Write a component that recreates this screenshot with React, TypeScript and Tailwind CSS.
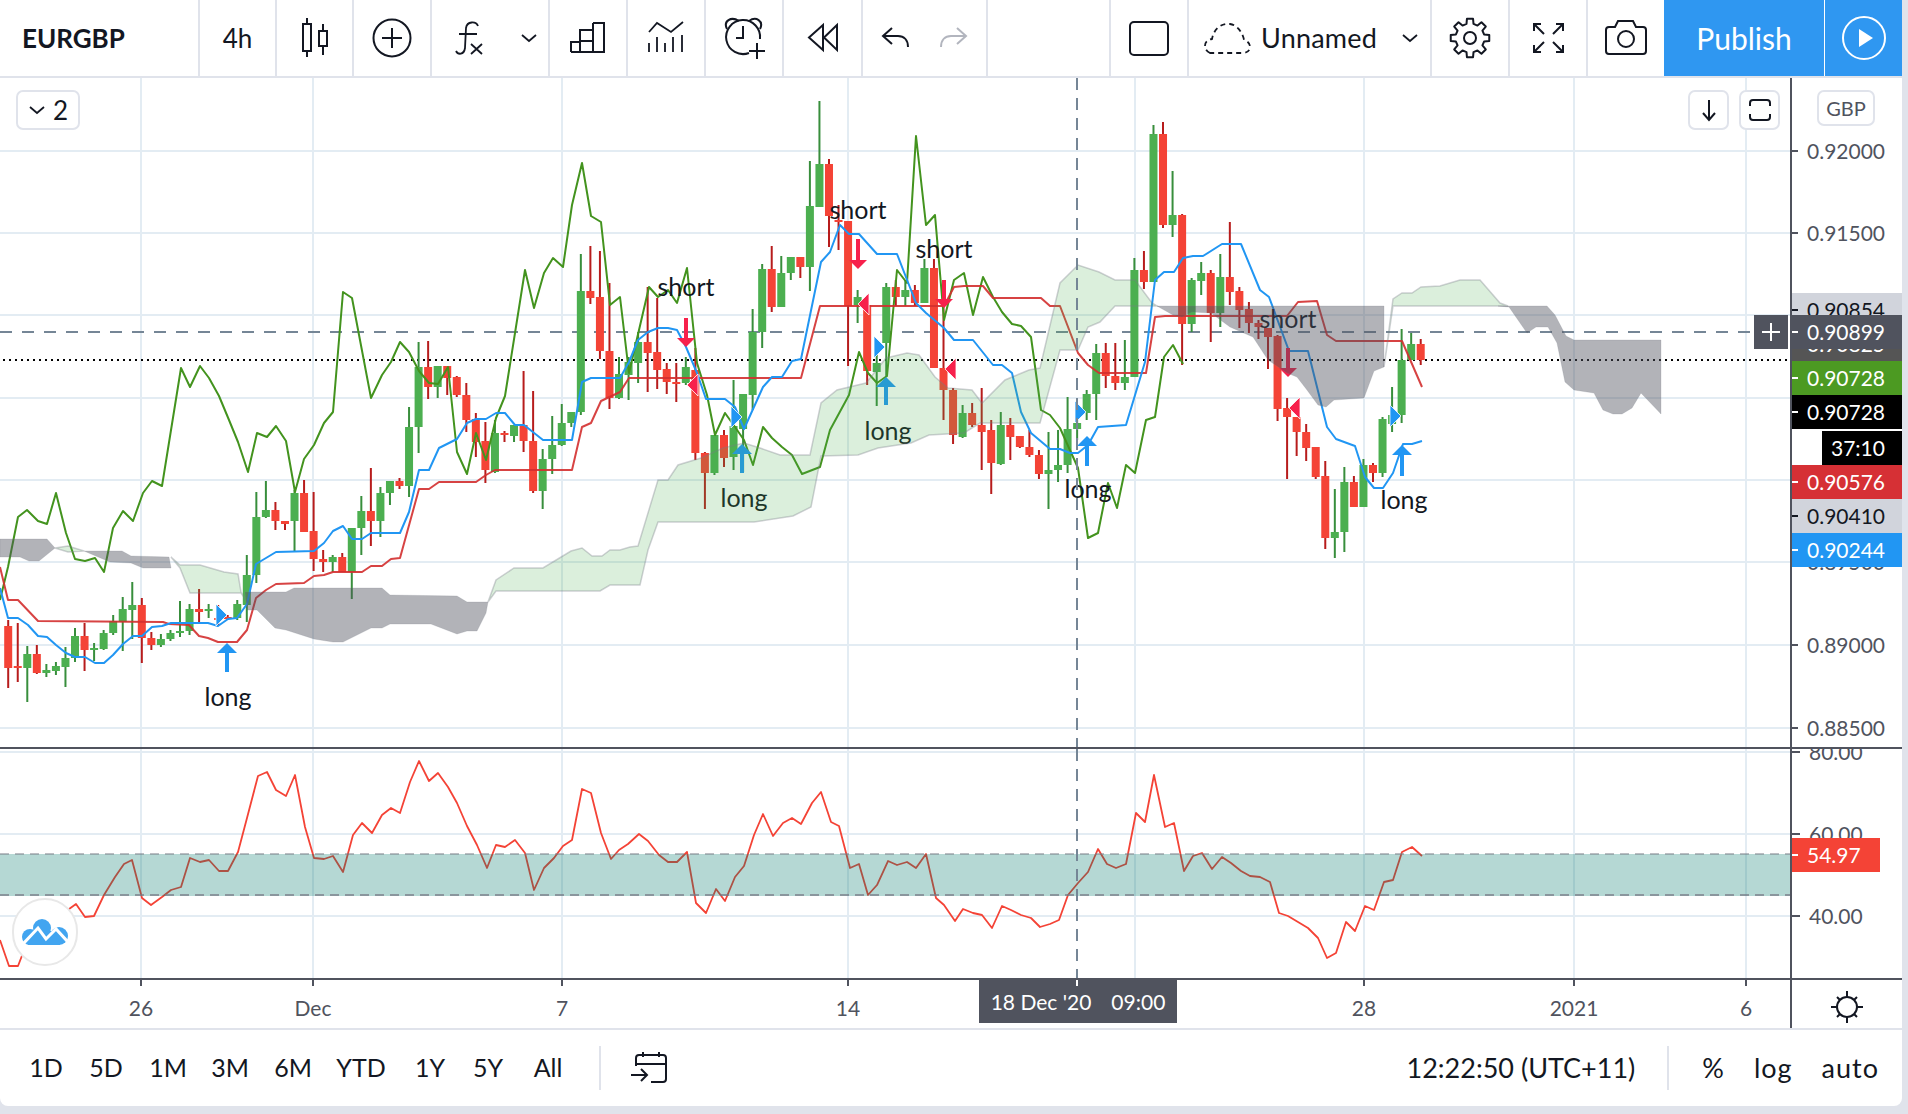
// candle: [bodyTop, bodyBottom, wickTop, wickBottom, isGreen], spaced 9.544px from x = 8.2
const CANDLES: [number, number, number, number, number][] = [
  [626, 668, 620, 688, 0], [666, 668, 623, 682, 0], [654, 668, 646, 702, 1], [654, 673, 645, 674, 0], [670, 673, 664, 677, 1],
  [666, 671, 662, 675, 1], [658, 667, 647, 687, 1], [636, 658, 628, 662, 1], [636, 650, 623, 671, 0], [648, 650, 643, 661, 1],
  [633, 649, 630, 650, 1], [621, 633, 615, 635, 1], [609, 622, 597, 651, 1], [605, 610, 582, 639, 1], [605, 638, 598, 663, 0],
  [638, 645, 632, 650, 0], [639, 645, 634, 647, 1], [633, 639, 630, 641, 1], [631, 633, 601, 637, 1], [609, 631, 604, 635, 1],
  [609, 612, 589, 622, 0], [609, 611, 604, 618, 1], [618, 620, 605, 625, 0], [617, 619, 615, 620, 0], [604, 618, 600, 620, 1],
  [575, 605, 555, 622, 1], [517, 575, 492, 583, 1], [510, 517, 481, 518, 1], [510, 521, 502, 530, 0], [521, 524, 521, 530, 0],
  [493, 521, 490, 551, 1], [493, 532, 480, 532, 0], [531, 559, 492, 571, 0], [559, 562, 550, 572, 0], [557, 562, 555, 572, 1],
  [557, 572, 553, 572, 0], [528, 572, 528, 599, 1], [511, 528, 496, 555, 1], [511, 521, 468, 546, 0], [493, 521, 487, 537, 1],
  [481, 493, 481, 505, 1], [481, 486, 478, 489, 0], [427, 486, 407, 497, 1], [367, 427, 342, 453, 1], [367, 387, 341, 399, 0],
  [366, 387, 366, 398, 1], [366, 378, 366, 395, 0], [377, 395, 376, 397, 0], [395, 420, 383, 432, 0], [419, 442, 413, 457, 0],
  [441, 470, 422, 483, 0], [433, 472, 420, 473, 1], [433, 435, 431, 442, 0], [425, 436, 425, 442, 1], [425, 441, 371, 452, 0],
  [441, 491, 391, 493, 0], [459, 491, 449, 509, 1], [445, 459, 416, 474, 1], [423, 445, 404, 446, 1], [412, 423, 412, 427, 1],
  [291, 412, 254, 415, 1], [291, 298, 246, 304, 0], [297, 351, 251, 359, 0], [351, 398, 283, 409, 0], [374, 398, 357, 399, 1],
  [362, 375, 357, 400, 1], [342, 363, 332, 383, 1], [342, 353, 287, 392, 0], [352, 370, 298, 389, 0], [369, 382, 363, 394, 0],
  [382, 384, 363, 402, 0], [367, 383, 357, 385, 1], [370, 453, 348, 460, 0], [453, 473, 452, 509, 0], [435, 473, 435, 475, 1],
  [435, 458, 430, 467, 0], [426, 457, 380, 470, 1], [394, 429, 394, 472, 1], [332, 395, 309, 410, 1], [269, 332, 264, 348, 1],
  [269, 307, 246, 312, 0], [273, 307, 256, 307, 1], [257, 273, 257, 280, 1], [257, 267, 257, 278, 0], [206, 267, 161, 291, 1],
  [164, 207, 101, 207, 1], [164, 216, 159, 247, 0], [220, 222, 205, 250, 0], [221, 306, 221, 366, 0], [297, 305, 290, 323, 1],
  [305, 371, 295, 385, 0], [363, 372, 350, 406, 1], [287, 343, 283, 377, 1], [287, 297, 280, 306, 0], [290, 297, 280, 306, 1],
  [290, 303, 285, 306, 0], [268, 303, 259, 303, 1], [268, 368, 259, 368, 0], [368, 390, 280, 420, 0], [390, 435, 388, 444, 0],
  [413, 437, 405, 438, 1], [413, 425, 403, 427, 0], [425, 432, 388, 470, 0], [430, 463, 420, 494, 0], [425, 464, 412, 465, 1],
  [425, 437, 418, 460, 0], [436, 447, 436, 448, 0], [447, 455, 430, 457, 0], [455, 474, 450, 479, 0], [470, 474, 432, 509, 1],
  [465, 470, 430, 482, 1], [429, 465, 397, 473, 1], [423, 429, 415, 440, 1], [394, 413, 390, 420, 1], [353, 394, 344, 420, 1],
  [353, 376, 343, 388, 0], [376, 383, 343, 390, 0], [377, 383, 340, 390, 1], [270, 377, 258, 377, 1], [270, 282, 251, 289, 0],
  [134, 282, 125, 282, 1], [134, 225, 122, 228, 0], [215, 225, 171, 237, 1], [215, 324, 214, 365, 0], [280, 324, 278, 332, 1],
  [273, 281, 262, 295, 1], [273, 313, 270, 342, 0], [277, 313, 254, 327, 1], [277, 292, 222, 305, 0], [291, 310, 287, 328, 0],
  [309, 323, 302, 333, 0], [323, 327, 320, 339, 0], [328, 337, 328, 369, 0], [336, 409, 335, 421, 0], [408, 417, 398, 479, 0],
  [417, 432, 417, 456, 0], [432, 448, 424, 461, 0], [447, 477, 447, 479, 0], [476, 538, 461, 549, 0], [532, 538, 489, 558, 1],
  [482, 532, 467, 552, 1], [482, 507, 476, 507, 0], [465, 507, 459, 507, 1], [465, 473, 463, 482, 0], [419, 473, 417, 477, 1],
  [415, 424, 387, 432, 1], [360, 415, 329, 423, 1], [344, 360, 333, 360, 1], [344, 360, 339, 365, 0],
];

const GREEN_LINE =
  "0,600 8,567 18,517 27,510 38,521 47,524 56,493 66,533 75,559 85,561 95,558 104,572 113,528 123,511 133,521 143,493 152,481 162,486 181,368 190,387 200,366 209,378 219,396 229,420 238,442 248,472 257,433 267,437 276,426 286,441 295,492 304,459 314,445 324,423 333,412 343,292 352,298 371,398 382,375 391,362 400,342 409,352 419,371 429,383 438,384 448,367 457,452 467,474 476,433 486,460 496,418 505,396 525,270 534,308 544,273 553,258 563,267 572,205 582,163 591,216 601,222 610,305 620,297 629,373 649,287 658,297 668,290 677,303 687,268 697,363 707,395 715,435 725,413 735,427 744,440 753,465 763,427 772,438 782,447 792,455 802,474 820,467 830,430 849,395 859,352 868,373 877,383 887,376 897,270 907,283 916,136 926,225 935,215 944,320 954,280 964,273 973,315 983,277 993,297 1002,312 1012,324 1021,326 1031,337 1041,410 1050,415 1060,428 1078,468 1088,538 1098,533 1108,483 1117,508 1126,465 1135,473 1146,420 1155,417 1164,357 1173,345 1183,364";

const BLUE_LINE =
  "0,588 8,618 18,618 28,625 38,636 47,637 56,645 66,653 75,657 85,657 95,663 104,663 113,655 123,644 133,636 142,636 152,627 162,626 171,623 208,623 218,626 228,619 237,618 247,604 256,564 266,558 276,552 314,551 324,543 333,531 343,526 352,539 362,539 371,533 400,533 409,512 419,470 429,470 439,448 457,439 467,423 476,419 486,419 496,413 505,413 515,425 524,425 543,440 572,440 582,382 591,378 620,378 629,362 638,340 648,332 658,328 668,328 677,330 686,347 697,373 706,399 725,399 735,407 744,429 763,387 772,377 782,377 792,361 801,359 821,262 830,252 840,225 849,234 859,234 877,254 897,254 916,303 926,313 944,328 954,340 973,340 993,365 1002,365 1012,373 1021,412 1031,433 1050,449 1060,449 1070,453 1078,453 1088,445 1098,427 1126,425 1145,362 1155,280 1164,272 1174,272 1183,258 1193,256 1203,256 1222,244 1241,244 1260,290 1269,297 1289,351 1308,351 1327,427 1336,439 1355,446 1365,477 1374,488 1383,488 1393,473 1403,444 1412,444 1422,441";

const RED_LINE =
  "0,567 8,600 18,600 38,621 163,622 169,624 189,625 199,636 208,638 218,642 237,642 247,630 256,598 266,590 276,584 304,583 314,576 324,575 333,572 362,572 371,566 382,566 391,559 400,558 419,489 429,489 439,482 476,482 486,475 495,470 572,470 582,427 591,423 601,401 620,392 629,378 801,378 820,306 944,306 954,287 964,286 983,286 993,298 1041,298 1050,306 1060,306 1078,353 1088,365 1099,373 1146,373 1155,317 1165,316 1287,316 1298,302 1317,301 1327,335 1336,341 1402,341 1422,387";

const RSI_LINE =
  "0,940 9,966 18,966 23,953 40,930 76,904 85,917 94,916 104,895 115,877 124,864 132,860 142,898 151,905 162,897 171,890 181,887 190,858 200,862 209,860 219,871 228,871 238,852 247,818 258,776 267,772 276,790 286,796 295,775 305,827 314,858 324,859 333,856 343,872 353,835 362,823 372,833 382,815 391,808 400,813 410,782 419,761 429,781 438,773 448,787 457,803 467,826 477,845 487,868 496,845 505,847 515,840 525,853 534,890 544,868 554,858 563,846 572,840 582,789 591,793 601,833 611,859 619,850 628,844 639,834 648,841 659,855 668,862 677,862 687,852 696,903 706,913 716,889 725,901 735,877 744,866 754,835 763,814 773,836 783,823 792,818 801,824 812,803 821,792 831,822 839,826 850,868 859,864 868,895 877,885 888,861 897,865 907,862 916,868 926,854 936,898 944,905 955,921 963,909 973,913 982,915 992,928 1002,906 1011,910 1021,915 1031,918 1040,927 1050,924 1059,920 1068,895 1078,883 1088,872 1098,849 1107,864 1116,868 1126,864 1136,813 1145,822 1154,775 1165,827 1174,823 1184,871 1193,856 1202,853 1212,869 1222,857 1231,863 1241,871 1250,876 1260,877 1270,882 1279,913 1288,916 1298,922 1308,928 1318,938 1327,958 1336,953 1346,922 1355,931 1365,906 1374,910 1384,882 1393,880 1402,852 1412,847 1422,856";

const CLOUD_GREEN = [
  "55,548 68,546 84,551 68,552",
  "171,557 180,565 200,565 224,572 238,574 241,592 248,603 241,593 190,593 180,568",
  "488,602 496,580 514,568 543,568 571,551 582,548 592,556 602,556 610,550 620,550 630,547 638,546 658,480 668,480 678,465 701,458 723,448 744,443 760,448 780,455 810,455 821,403 837,390 866,383 886,358 907,353 919,355 935,377 948,388 972,390 982,403 1005,380 1029,370 1040,368 1060,283 1078,265 1099,272 1115,280 1135,280 1152,303 1157,306 1115,306 1100,322 1088,327 1078,350 1060,350 1040,423 980,423 964,433 929,435 911,443 878,448 858,455 821,456 811,507 793,516 754,522 658,522 648,550 640,585 610,585 600,591 496,591",
  "1384,367 1393,299 1402,293 1412,293 1421,287 1440,286 1460,280 1480,280 1500,303 1508,306 1393,306",
];

const CLOUD_GRAY = [
  "0,539 47,539 55,548 39,561 29,561 20,557 0,557",
  "84,551 122,551 131,556 169,557 171,568 143,568 131,563 110,562",
  "245,592 286,592 294,588 382,588 390,595 457,596 467,602 488,602 486,613 477,631 467,631 457,634 431,624 390,624 382,628 371,628 343,642 333,642 314,639 286,630 275,628 257,610 247,610",
  "1157,306 1384,306 1384,367 1374,371 1364,398 1334,400 1326,407 1318,405 1307,390 1297,377 1287,373 1268,360 1253,337 1230,327 1211,313 1192,312 1182,317 1173,315",
  "1498,306 1547,306 1555,315 1566,336 1574,340 1661,340 1661,414 1641,393 1632,408 1622,414 1613,414 1603,410 1594,393 1574,390 1565,382 1557,343 1548,327 1536,327 1527,333 1509,307",
];

const LONGS = [
  { x: 227, top: 643, bottom: 672, labelY: 696, labelX: 228 },
  { x: 742, top: 444, bottom: 473, labelY: 497, labelX: 744 },
  { x: 886, top: 377, bottom: 405, labelY: 430, labelX: 888 },
  { x: 1087, top: 436, bottom: 466, labelY: 488, labelX: 1088 },
  { x: 1402, top: 445, bottom: 476, labelY: 499, labelX: 1404 },
];

const SHORTS = [
  { x: 686, top: 318, bottom: 347, labelY: 286 },
  { x: 858, top: 239, bottom: 269, labelY: 209 },
  { x: 944, top: 280, bottom: 308, labelY: 248 },
  { x: 1288, top: 348, bottom: 377, labelY: 318 },
];

const BLUE_FLAGS = [[216, 615], [731, 417], [874, 347], [1075, 412], [1390, 416]];
const PINK_FLAGS = [[698, 385], [869, 304], [956, 369], [1300, 408]];

const V_GRID = [141, 313, 562, 848, 1135, 1364, 1574, 1746];
const H_GRID = [151, 233, 315, 398, 480, 562, 645, 728];

const TIME_LABELS = [
  { x: 141, text: "26" },
  { x: 313, text: "Dec" },
  { x: 562, text: "7" },
  { x: 848, text: "14" },
  { x: 1364, text: "28" },
  { x: 1574, text: "2021" },
  { x: 1746, text: "6" },
];

const PRICE_TICKS = [
  { y: 151, text: "0.92000" },
  { y: 233, text: "0.91500" },
  { y: 562, text: "0.89500" },
  { y: 645, text: "0.89000" },
  { y: 728, text: "0.88500" },
];

const PRICE_TAGS = [
  { y: 310, text: "0.90854", cls: "bg-[#d1d4dc] text-[#131722]" },
  { y: 344, text: "0.90825", cls: "bg-[#555555] text-white" },
  { y: 332, text: "0.90899", cls: "bg-[#50535e] text-white" },
  { y: 378, text: "0.90728", cls: "bg-[#4c9a22] text-white" },
  { y: 412, text: "0.90728", cls: "bg-black text-white" },
  { y: 482, text: "0.90576", cls: "bg-[#d63035] text-white" },
  { y: 516, text: "0.90410", cls: "bg-[#d1d4dc] text-[#131722]" },
  { y: 550, text: "0.90244", cls: "bg-[#2196f3] text-white" },
];

const INK = "#131722";

// 8 tooth cog outline around 0,0
const gearPath = () => {
  const pts: string[] = [];
  for (let i = 0; i < 8; i++) {
    const a = -90 + i * 45;
    [[14.5, -14], [19.5, -9], [19.5, 9], [14.5, 14]].forEach(([r, d]) => {
      const t = ((a + d) * Math.PI) / 180;
      pts.push(`${(r * Math.cos(t)).toFixed(2)} ${(r * Math.sin(t)).toFixed(2)}`);
    });
  }
  return `M${pts.join("L")}Z`;
};

const Cell = ({ w, children }: { w: string; children: React.ReactNode }) => (
  <div className={`${w} shrink-0 h-full border-r-2 border-[#e0e3eb] flex items-center justify-center`}>{children}</div>
);

const Chevron = () => (
  <svg width="16" height="10" viewBox="0 0 16 10" fill="none" stroke={INK} strokeWidth="1.8">
    <polyline points="1,2 8,8 15,2" />
  </svg>
);

const Chart = () => (
  <svg className="block" width="1790" height="669" viewBox="0 78 1790 669">
    {V_GRID.map((x) => (
      <line key={x} x1={x} x2={x} y1="78" y2="747" stroke="#e3ecf3" strokeWidth="2" />
    ))}
    {H_GRID.map((y) => (
      <line key={y} x1="0" x2="1790" y1={y} y2={y} stroke="#e3ecf3" strokeWidth="2" />
    ))}
    <line x1="0" x2="1752" y1="332" y2="332" stroke="#758696" strokeWidth="2" strokeDasharray="12 10" />
    <line x1="3" x2="1788" y1="360" y2="360" stroke="#000000" strokeWidth="2" strokeDasharray="2 4" />
    {CANDLES.map(([top, bottom, wickTop, wickBottom, up], i) => {
      const x = 8.2 + 9.544 * i;
      return (
        <g key={i}>
          <line x1={x} x2={x} y1={wickTop} y2={wickBottom} stroke={up ? "#388e3c" : "#b71c1c"} strokeWidth="2" />
          <rect x={x - 4} y={top} width="8" height={bottom - top} fill={up ? "#4caf50" : "#f44336"} />
        </g>
      );
    })}
    <polyline points={GREEN_LINE} fill="none" stroke="#43931e" strokeWidth="2" strokeLinejoin="round" />
    <polyline points={RED_LINE} fill="none" stroke="#d32f2f" strokeOpacity="0.9" strokeWidth="2" strokeLinejoin="round" />
    <polyline points={BLUE_LINE} fill="none" stroke="#2196f3" strokeWidth="2" strokeLinejoin="round" />
    {LONGS.map((m) => (
      <g key={m.x}>
        <rect x={m.x - 2} y={m.top + 9} width="4" height={m.bottom - m.top - 9} fill="#2196f3" />
        <polygon points={`${m.x},${m.top} ${m.x + 10},${m.top + 10} ${m.x - 10},${m.top + 10}`} fill="#2196f3" />
        <text x={m.labelX} y={m.labelY} fontSize="25" fill={INK} textAnchor="middle" dominantBaseline="central">
          long
        </text>
      </g>
    ))}
    {SHORTS.map((m) => (
      <g key={m.x}>
        <rect x={m.x - 2} y={m.top} width="4" height={m.bottom - m.top - 8} fill="#f7214c" />
        <polygon points={`${m.x},${m.bottom} ${m.x + 9},${m.bottom - 9} ${m.x - 9},${m.bottom - 9}`} fill="#f7214c" />
        <text x={m.x} y={m.labelY} fontSize="25" fill={INK} textAnchor="middle" dominantBaseline="central">
          short
        </text>
      </g>
    ))}
    {BLUE_FLAGS.map(([x, y]) => (
      <polygon key={x} points={`${x},${y - 11} ${x + 11},${y} ${x},${y + 11}`} fill="#2196f3" stroke="white" strokeWidth="0.8" />
    ))}
    {PINK_FLAGS.map(([x, y]) => (
      <polygon key={x} points={`${x},${y - 11} ${x - 11},${y} ${x},${y + 11}`} fill="#f7214c" stroke="white" strokeWidth="0.8" />
    ))}
    {CLOUD_GREEN.map((p) => (
      <polygon key={p} points={p} fill="#4caf50" fillOpacity="0.2" stroke="#787b86" strokeOpacity="0.35" strokeWidth="1.5" />
    ))}
    {CLOUD_GRAY.map((p) => (
      <polygon key={p} points={p} fill="#50535e" fillOpacity="0.44" stroke="#787b86" strokeOpacity="0.2" strokeWidth="1" />
    ))}
    <line x1="1077" x2="1077" y1="78" y2="747" stroke="#758696" strokeWidth="2" strokeDasharray="12 8" />
  </svg>
);

const RsiPane = () => (
  <svg className="block" width="1790" height="229" viewBox="0 749 1790 229">
    {V_GRID.map((x) => (
      <line key={x} x1={x} x2={x} y1="749" y2="978" stroke="#e3ecf3" strokeWidth="2" />
    ))}
    {[752, 834, 916].map((y) => (
      <line key={y} x1="0" x2="1790" y1={y} y2={y} stroke="#e3ecf3" strokeWidth="2" />
    ))}
    <polyline points={RSI_LINE} fill="none" stroke="#f44336" strokeWidth="1.8" strokeLinejoin="round" />
    <rect x="0" y="854" width="1790" height="42" fill="#00796b" fillOpacity="0.29" />
    <line x1="0" x2="1790" y1="854" y2="854" stroke="#787b86" strokeOpacity="0.5" strokeWidth="2" strokeDasharray="9 6" />
    <line x1="0" x2="1790" y1="895" y2="895" stroke="#787b86" strokeOpacity="0.7" strokeWidth="2" strokeDasharray="9 6" />
    <line x1="1077" x2="1077" y1="749" y2="978" stroke="#758696" strokeWidth="2" strokeDasharray="12 8" />
  </svg>
);

const PriceLabel = ({ y, text, cls }: { y: number; text: string; cls: string }) => (
  <div
    className={`absolute left-[-2px] w-[112px] h-[34px] flex items-center ${cls} text-[21px] leading-none`}
    style={{ top: y - 78 - 17 }}
  >
    <span className="w-[8px] h-[2px] bg-current shrink-0" />
    <span className="ml-[9px] mt-[-2px]">{text}</span>
  </div>
);

const IconButton = ({ left, children }: { left: string; children: React.ReactNode }) => (
  <div
    className={`absolute ${left} top-[12px] w-[41px] h-[40px] rounded-[7px] border-2 border-[#e0e3eb] bg-white flex items-center justify-center`}
  >
    {children}
  </div>
);

export default function App() {
  return (
    <div className="w-[1908px] h-[1114px] overflow-hidden bg-[#e0e3eb] pr-[6px] pb-[8px] flex flex-col text-[#131722] [font-family:Lato,sans-serif]">
      {/* Top toolbar */}
      <header className="h-[76px] shrink-0 bg-white flex mb-[2px]">
        <Cell w="w-[200px]">
          <span className="w-full pl-[22px] text-[26px] font-bold">EURGBP</span>
        </Cell>
        <Cell w="w-[77px]">
          <span className="text-[26px]">4h</span>
        </Cell>
        <Cell w="w-[77px]">
          <svg width="32" height="42" viewBox="299 17 32 42" fill="none" stroke={INK} strokeWidth="2">
            <rect x="303" y="24" width="8" height="27" />
            <path d="M307 18V24M307 51V57M323 24V31M323 46V55" />
            <rect x="319" y="31" width="8" height="15" />
          </svg>
        </Cell>
        <Cell w="w-[78px]">
          <svg width="42" height="42" viewBox="370 18 42 42" fill="none" stroke={INK} strokeWidth="2">
            <circle cx="391" cy="39" r="18.5" />
            <path d="M381 39H401M391 29V49" />
          </svg>
        </Cell>
        <Cell w="w-[118px]">
          <div className="w-full flex items-center gap-[35px] pl-[20px]">
            <svg width="34" height="38" viewBox="452 18 34 38" fill="none" stroke={INK} strokeWidth="1.8">
              <path d="M478 25C476 20 467 20 466 27L465 47C464 54 458 54 456 50M459 33H477" />
              <path d="M471 43L482 53M482 43L471 53" />
            </svg>
            <Chevron />
          </div>
        </Cell>
        <Cell w="w-[78px]">
          <svg width="40" height="38" viewBox="568 20 40 38" fill="none" stroke={INK} strokeWidth="2">
            <path d="M571 53V43H580M580 53V31H593V53M593 24H604V53H571M593 53V24M580 42H593" />
          </svg>
        </Cell>
        <Cell w="w-[78px]">
          <svg width="42" height="38" viewBox="646 20 42 38" fill="none" stroke={INK} strokeWidth="1.8">
            <polyline points="650,33 658,24 672,33 684,23" />
            <path d="M650 44V53M658 38V53M666 44V53M674 38V53M683 36V53" />
          </svg>
        </Cell>
        <Cell w="w-[78px]">
          <svg width="46" height="46" viewBox="720 16 46 46" fill="none" stroke={INK} strokeWidth="2">
            <path d="M748 54A17 17 0 1 1 759 40" />
            <path d="M726 30C722 22 730 17 738 22M748 22C755 17 763 22 759 30" />
            <path d="M742 27V39H735" />
            <path d="M748 52H764M756 44V60" />
          </svg>
        </Cell>
        <Cell w="w-[79px]">
          <svg width="38" height="32" viewBox="804 24 38 32" fill="none" stroke={INK} strokeWidth="2">
            <polygon points="823,27 809,39.5 823,52" />
            <polygon points="837,27 824,39.5 837,52" />
          </svg>
        </Cell>
        <Cell w="w-[125px]">
          <div className="flex gap-[23px]">
            <svg width="34" height="28" viewBox="878 24 34 28" fill="none" stroke={INK} strokeWidth="2">
              <path d="M882 36H897C903 36 907 40 907 47M891 28L882 36L891 44" />
            </svg>
            <svg width="34" height="28" viewBox="935 24 34 28" fill="none" stroke="#b2b5be" strokeWidth="2">
              <path d="M965 36H950C944 36 940 40 940 47M956 28L965 36L956 44" />
            </svg>
          </div>
        </Cell>
        <div className="w-[123px] shrink-0 h-full border-r-2 border-[#e0e3eb]" />
        <Cell w="w-[78px]">
          <svg width="44" height="40" viewBox="1129 19 44 40" fill="none" stroke={INK} strokeWidth="2">
            <rect x="1132" y="23" width="38" height="33" rx="4" />
          </svg>
        </Cell>
        <div className="w-[243px] shrink-0 h-full border-r-2 border-[#e0e3eb] flex items-center pl-[14px] pr-[12px]">
          <svg width="52" height="36" viewBox="1203 20 52 36" fill="none" stroke={INK} strokeWidth="1.8" strokeDasharray="5 4">
            <path d="M1210 53C1203 50 1203 40 1212 39C1214 28 1222 23 1230 24C1238 25 1243 34 1244 40C1252 42 1252 52 1244 53Z" />
          </svg>
          <span className="ml-[6px] text-[27px] tracking-[0.2px]">Unnamed</span>
          <span className="ml-auto">
            <Chevron />
          </span>
        </div>
        <Cell w="w-[78px]">
          <svg width="44" height="44" viewBox="-22 -22 44 44" fill="none" stroke={INK} strokeWidth="2" strokeLinejoin="round">
            <path d={gearPath()} />
            <circle r="6" />
          </svg>
        </Cell>
        <Cell w="w-[78px]">
          <svg width="37" height="36" viewBox="1530 20 37 36" fill="none" stroke={INK} strokeWidth="2">
            <path d="M1534 31V24H1541M1534 24L1544 34M1563 31V24H1556M1563 24L1553 34M1534 45V52H1541M1534 52L1544 42M1563 45V52H1556M1563 52L1553 42" />
          </svg>
        </Cell>
        <div className="w-[76px] shrink-0 h-full flex items-center justify-center">
          <svg width="46" height="38" viewBox="1602 18 46 38" fill="none" stroke={INK} strokeWidth="2">
            <path d="M1605 29Q1605 26 1608 26H1614L1617 20H1632L1635 26H1642Q1645 26 1645 29V50Q1645 53 1642 53H1608Q1605 53 1605 50Z" />
            <circle cx="1625" cy="38" r="8" />
          </svg>
        </div>
        <div className="w-[161px] shrink-0 h-full bg-[#2f97f1] border-r border-white flex items-center justify-center text-white text-[30px]">
          Publish
        </div>
        <div className="flex-1 h-full bg-[#2f97f1] flex items-center justify-center">
          <svg width="46" height="46" viewBox="0 0 46 46" fill="none" stroke="white" strokeWidth="2">
            <circle cx="23" cy="23" r="21" />
            <polygon points="18,14 32,23 18,32" fill="white" stroke="none" />
          </svg>
        </div>
      </header>

      {/* Chart panes */}
      <section className="h-[950px] shrink-0 bg-white flex flex-col mb-[2px]">
        <div className="h-[669px] flex shrink-0">
          <div className="relative w-[1790px] shrink-0">
            <Chart />
            <div className="absolute left-[16px] top-[12px] w-[64px] h-[40px] rounded-[7px] border-2 border-[#e0e3eb] bg-white flex items-center pl-[11px] gap-[8px] text-[26px]">
              <Chevron />
              <span>2</span>
            </div>
            <IconButton left="left-[1688px]">
              <svg width="16" height="24" viewBox="0 0 16 24" fill="none" stroke={INK} strokeWidth="2">
                <path d="M8 2V22M2 15L8 22L14 15" />
              </svg>
            </IconButton>
            <IconButton left="left-[1739px]">
              <svg width="24" height="24" viewBox="0 0 24 24" fill="none" stroke={INK} strokeWidth="2">
                <path d="M2 8V5Q2 2 5 2H19Q22 2 22 5V8M2 16V19Q2 22 5 22H19Q22 22 22 19V16" />
              </svg>
            </IconButton>
            <div className="absolute left-[1754px] top-[237px] w-[34px] h-[34px] bg-[#50535e] flex items-center justify-center">
              <svg width="20" height="20" viewBox="0 0 20 20" stroke="white" strokeWidth="2">
                <path d="M1 10H19M10 1V19" />
              </svg>
            </div>
          </div>
          <div className="relative flex-1 border-l-2 border-[#50535e] overflow-hidden">
            {PRICE_TICKS.map((t) => (
              <PriceLabel key={t.y} y={t.y} text={t.text} cls="text-[#50535e]" />
            ))}
            {PRICE_TAGS.map((t) => (
              <PriceLabel key={t.y} y={t.y} text={t.text} cls={t.cls} />
            ))}
            <div className="absolute right-0 top-[353px] w-[80px] h-[34px] bg-black text-white text-[21px] flex items-center pl-[9px]">
              37:10
            </div>
            <div className="absolute left-[25px] top-[12px] w-[58px] h-[36px] rounded-[7px] border-2 border-[#e0e3eb] bg-white flex items-center justify-center text-[20px] text-[#50535e]">
              GBP
            </div>
          </div>
        </div>

        <div className="h-[2px] bg-[#50535e] shrink-0" />

        <div className="h-[229px] flex shrink-0">
          <div className="relative w-[1790px] shrink-0">
            <RsiPane />
            <div className="absolute left-[12px] top-[149px] w-[66px] h-[68px] rounded-full border-2 border-[#e8e8e8] bg-white flex items-center justify-center">
              <svg width="46" height="27" viewBox="0 0 46 27" fill="#42a5f0">
                <circle cx="20" cy="9" r="9" />
                <circle cx="8" cy="18" r="8" />
                <circle cx="37" cy="17" r="9" />
                <rect x="6" y="12" width="32" height="14" />
                <polyline points="1,25 16,9 24,20 34,10 45,22" fill="none" stroke="white" strokeWidth="3" />
              </svg>
            </div>
          </div>
          <div className="relative flex-1 border-l-2 border-[#50535e] overflow-hidden text-[21px] text-[#50535e]">
            {[
              { top: -14, text: "80.00" },
              { top: 68, text: "60.00" },
              { top: 150, text: "40.00" },
            ].map((t) => (
              <div key={t.text} className="absolute left-0 h-[34px] flex items-center" style={{ top: t.top }}>
                <span className="w-[8px] h-[2px] bg-current" />
                <span className="ml-[9px]">{t.text}</span>
              </div>
            ))}
            <div className="absolute left-[-2px] top-[89px] w-[90px] h-[34px] bg-[#f44336] text-white flex items-center">
              <span className="w-[8px] h-[2px] bg-white" />
              <span className="ml-[9px]">54.97</span>
            </div>
          </div>
        </div>

        <div className="h-[2px] bg-[#50535e] shrink-0" />

        <div className="relative h-[48px] shrink-0 text-[21px] text-[#50535e]">
          {TIME_LABELS.map((t) => (
            <div key={t.text} className="absolute top-0 w-0 flex flex-col items-center" style={{ left: t.x }}>
              <span className="w-[2px] h-[6px] bg-[#50535e] shrink-0" />
              <span className="mt-[9px] leading-[26px]">{t.text}</span>
            </div>
          ))}
          <div className="absolute left-[979px] top-0 w-[198px] h-[43px] bg-[#50535e] text-white flex items-center justify-center gap-[20px]">
            <span>18 Dec '20</span>
            <span>09:00</span>
            <span className="absolute left-[97px] top-0 w-[2px] h-[6px] bg-white" />
          </div>
          <div className="absolute left-[1790px] top-0 bottom-0 w-[2px] bg-[#50535e]" />
          <svg className="absolute left-[1829px] top-[9px]" width="36" height="36" viewBox="0 0 36 36" fill="none" stroke={INK} strokeWidth="2">
            <circle cx="18" cy="18" r="10" />
            <path d="M18 2V8M18 28V34M2 18H8M28 18H34M8 8L11 11M28 8L25 11M8 28L11 25M28 28L25 25" />
          </svg>
        </div>
      </section>

      {/* Bottom bar */}
      <footer className="flex-1 bg-white rounded-b-[8px] flex items-center text-[25px]">
        <div className="w-[16px]" />
        {[
          { w: "w-[60px]", t: "1D" },
          { w: "w-[60px]", t: "5D" },
          { w: "w-[64px]", t: "1M" },
          { w: "w-[60px]", t: "3M" },
          { w: "w-[66px]", t: "6M" },
          { w: "w-[70px]", t: "YTD" },
          { w: "w-[68px]", t: "1Y" },
          { w: "w-[48px]", t: "5Y" },
          { w: "w-[72px]", t: "All" },
        ].map((b) => (
          <span key={b.t} className={`${b.w} text-center shrink-0`}>
            {b.t}
          </span>
        ))}
        <span className="ml-[15px] w-[2px] h-[44px] bg-[#e0e3eb]" />
        <svg className="ml-[28px]" width="40" height="36" viewBox="629 1050 40 36" fill="none" stroke={INK} strokeWidth="2">
          <path d="M636 1066V1058Q636 1055 639 1055H663Q666 1055 666 1058V1079Q666 1082 663 1082H651M636 1064H666M643 1052V1057M659 1052V1057" />
          <path d="M631 1075H647M641 1069L647 1075L641 1081" />
        </svg>
        <div className="ml-auto flex items-center pr-[23px] text-[27px]">
          <span>12:22:50 (UTC+11)</span>
          <span className="ml-[32px] w-[2px] h-[44px] bg-[#e0e3eb]" />
          <span className="ml-[33px]">%</span>
          <span className="ml-[30px] tracking-[1px]">log</span>
          <span className="ml-[29px] tracking-[1px]">auto</span>
        </div>
      </footer>
    </div>
  );
}
